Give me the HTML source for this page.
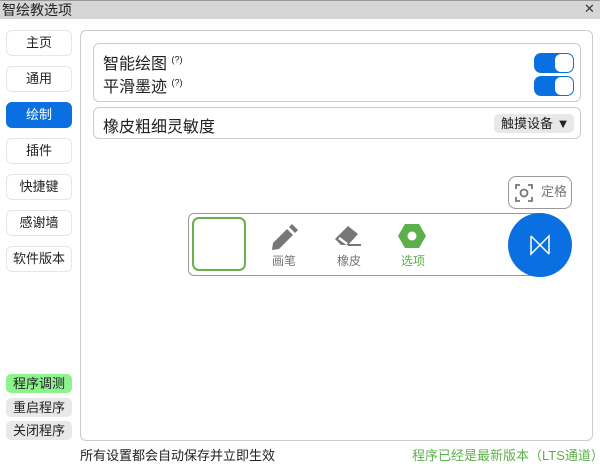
<!DOCTYPE html><html><head><meta charset="utf-8"><style>
*{margin:0;padding:0;box-sizing:border-box}
body{width:600px;height:467px;background:#fff;font-family:"Liberation Sans","Noto Sans CJK SC",sans-serif;position:relative;overflow:hidden;color:#222}
.a{position:absolute}
.title{left:0;top:0;width:600px;height:19px;background:#d6d6d6;border-top:1px solid #999;font-size:14px;line-height:18px;padding-left:2px}
.nb{left:6px;width:66px;height:26px;border:1px solid #e6e6e6;border-radius:6px;font-size:13px;text-align:center;line-height:24px}
.sb{left:6px;width:66px;height:19px;border-radius:5px;background:#e8e8e8;font-size:13px;text-align:center;line-height:19px}
.tg{left:534px;width:40px;height:20px;background:#0a6fe0;border-radius:7px}
.tg i{position:absolute;right:1px;top:1px;width:18px;height:18px;background:#fff;border-radius:6px}
</style></head><body>
<div class="a title">智绘教选项</div>
<div class="a" style="left:584px;top:2px;font-size:13px;line-height:14px;color:#333">✕</div>
<div class="a nb" style="top:30px">主页</div>
<div class="a nb" style="top:66px">通用</div>
<div class="a nb" style="top:102px;background:#0a6fe0;color:#fff;border-color:#0a6fe0">绘制</div>
<div class="a nb" style="top:138px">插件</div>
<div class="a nb" style="top:174px">快捷键</div>
<div class="a nb" style="top:210px">感谢墙</div>
<div class="a nb" style="top:246px">软件版本</div>
<div class="a sb" style="top:374px;background:#8ef28e">程序调测</div>
<div class="a sb" style="top:398px">重启程序</div>
<div class="a sb" style="top:421px">关闭程序</div>
<div class="a" style="left:80px;top:30px;width:513px;height:411px;border:1px solid #ccc;border-radius:6px"></div>
<div class="a" style="left:93px;top:43px;width:488px;height:59px;border:1px solid #ccc;border-radius:6px"></div>
<div class="a" style="left:103px;top:50px;font-size:16px">智能绘图 <sup style="font-size:9px">(?)</sup></div>
<div class="a" style="left:103px;top:73px;font-size:16px">平滑墨迹 <sup style="font-size:9px">(?)</sup></div>
<div class="a tg" style="top:53px"><i></i></div>
<div class="a tg" style="top:76px"><i></i></div>
<div class="a" style="left:93px;top:107px;width:488px;height:32px;border:1px solid #ccc;border-radius:6px"></div>
<div class="a" style="left:103px;top:113px;font-size:16px">橡皮粗细灵敏度</div>
<div class="a" style="left:494px;top:114px;width:80px;height:19px;background:#e8e8e8;border-radius:5px;font-size:13px;line-height:19px;padding-left:7px">触摸设备 ▼</div>
<div class="a" style="left:508px;top:176px;width:64px;height:33px;border:1.5px solid #999;border-radius:8px;font-size:13px;color:#777;line-height:30px;padding-left:32px">定格</div>
<svg class="a" style="left:514px;top:183px" width="20" height="20" viewBox="0 0 20 20" fill="none" stroke="#777" stroke-width="1.8"><path d="M2 6V2h4M14 2h4v4M18 14v4h-4M6 18H2v-4"/><circle cx="10" cy="10" r="3.5"/></svg>
<div class="a" style="left:188px;top:213px;width:360px;height:63px;border:1.5px solid #999;border-radius:6px"></div>
<div class="a" style="left:192px;top:217px;width:54px;height:54px;border:2px solid #6ab04c;border-radius:7px;background:#fff"></div>
<svg class="a" style="left:270px;top:224px" width="28" height="28" viewBox="0 0 28 28"><path d="M2 26l1-7 14-14 6 6-14 14z" fill="#777"/><path d="M19 3l3-3 6 6-3 3z" fill="#777"/></svg>
<div class="a" style="left:272px;top:252px;font-size:12px;color:#777">画笔</div>
<svg class="a" style="left:334px;top:223px" width="30" height="26" viewBox="0 0 30 26"><path d="M1 16L14 3l10 8-10 11H7z" fill="#777"/><path d="M5 15l8 6" stroke="#fff" stroke-width="2.5"/><path d="M14 22h13" stroke="#777" stroke-width="2"/></svg>
<div class="a" style="left:337px;top:252px;font-size:12px;color:#777">橡皮</div>
<svg class="a" style="left:398px;top:223px" width="28" height="26" viewBox="0 0 28 26"><path d="M7 1h14l7 12-7 12H7L0 13z" fill="#5cb04a"/><circle cx="14" cy="13" r="4.5" fill="#fff"/></svg>
<div class="a" style="left:401px;top:252px;font-size:12px;color:#5cb04a">选项</div>
<div class="a" style="left:508px;top:213px;width:64px;height:64px;border-radius:50%;background:#0a6fe0"></div>
<svg class="a" style="left:528px;top:233px" width="24" height="24" viewBox="0 0 24 24" fill="none" stroke="#fff" stroke-width="1.5"><path d="M3 3v18l18-18v18"/><path d="M3 3l18 18"/></svg>
<div class="a" style="left:80px;top:445px;font-size:13px">所有设置都会自动保存并立即生效</div>
<div class="a" style="left:412px;top:445px;font-size:13px;color:#5cb04a">程序已经是最新版本（LTS通道）</div>
</body></html>
